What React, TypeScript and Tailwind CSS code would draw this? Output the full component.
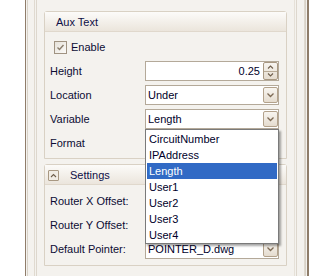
import React from "react";

const font = { fontFamily: '"Liberation Sans", Arial, sans-serif' };

function DropBtn() {
  return (
    <div className="absolute right-0 top-[1px] w-[15px] h-[16px] rounded-[2px] border border-[#b3a28c] bg-gradient-to-b from-[#f8f5f0] to-[#e5dccf] flex items-center justify-center">
      <svg width="9" height="6" viewBox="0 0 9 6">
        <path d="M1.5 1.5 L4.5 4.5 L7.5 1.5" fill="none" stroke="#7d6a55" strokeWidth="1.3" />
      </svg>
    </div>
  );
}

function Combo({ value }: { value: string }) {
  return (
    <div className="relative w-[134px] h-[20px] bg-white border border-[#b4a999] text-[11px] leading-[18px] pl-[2px] text-[#00002a]">
      {value}
      <DropBtn />
    </div>
  );
}

function Row({ label, children }: { label: string; children?: React.ReactNode }) {
  return (
    <div className="flex items-center h-[20px]">
      <div className="w-[95px] text-[11px] text-[#0c0c34]">{label}</div>
      {children}
    </div>
  );
}

export default function App() {
  const items = ["CircuitNumber", "IPAddress", "Length", "User1", "User2", "User3", "User4"];
  return (
    <div className="w-[326px] h-[276px] bg-white flex overflow-hidden relative" style={font}>
      <div className="ml-[25px] w-[284px] h-full border-l border-r-2 border-[#8f7d6a] bg-[#f4f2ee] flex">
        <div className="ml-[1px] mr-[1px] flex-1 border-l border-r border-[#d8d2c8] flex">
          <div className="ml-[6px] flex-1 border-l border-r border-[#e0dad0] flex">
            <div className="ml-[1px] mr-[7px] flex-1 border-l border-r border-[#ddd7cd] flex">
              <div className="flex-1 mr-[1px] border-r border-[#e6e1d8] pt-[11px] flex flex-col">
                {/* Aux Text group */}
                <div className="ml-[7px] w-[243px] h-[148px] border border-[#d9d1c4] rounded-t-[3px] flex flex-col">
                  <div className="h-[20px] pt-[2px] border-b border-[#e0d8cc] bg-gradient-to-b from-[#fcfbf9] to-[#ebe5dc] flex items-center pl-[11px] text-[11px] text-[#0e0e46]">
                    Aux Text
                  </div>
                  <div className="flex-1 pl-[5px] flex flex-col">
                    <div className="flex items-center h-[13px] mt-[9px] ml-[4px]">
                      <div className="w-[13px] h-[13px] border border-[#a09382] bg-gradient-to-br from-[#e6e2da] to-[#fbfaf8] flex items-center justify-center">
                        <svg width="9" height="9" viewBox="0 0 9 9">
                          <path d="M1.5 4.5 L3.5 6.5 L7.5 2" fill="none" stroke="#8a7d6c" strokeWidth="1.4" />
                        </svg>
                      </div>
                      <span className="ml-[4px] text-[11px] text-[#0c0c34]">Enable</span>
                    </div>
                    <div className="mt-[7px] flex flex-col gap-[4px]">
                      <Row label="Height">
                        <div className="relative w-[134px] h-[20px] bg-white border border-[#b4a999] text-[11px] leading-[18px] text-right pr-[18px] text-[#00002a]">
                          0.25
                          <div className="absolute right-0 top-0 w-[15px] h-[18px] rounded-[2px] border border-[#a89882] bg-gradient-to-b from-[#f8f5f0] to-[#e5dccf] flex flex-col">
                            <div className="flex-1 flex items-center justify-center border-b border-[#b8aa96]">
                              <svg width="7" height="4" viewBox="0 0 7 4"><path d="M1 3.5 L3.5 1 L6 3.5" fill="none" stroke="#6f5e4c" strokeWidth="1.1" /></svg>
                            </div>
                            <div className="flex-1 flex items-center justify-center">
                              <svg width="7" height="4" viewBox="0 0 7 4"><path d="M1 0.5 L3.5 3 L6 0.5" fill="none" stroke="#6f5e4c" strokeWidth="1.1" /></svg>
                            </div>
                          </div>
                        </div>
                      </Row>
                      <Row label="Location"><Combo value="Under" /></Row>
                      <Row label="Variable"><Combo value="Length" /></Row>
                      <Row label="Format"><Combo value="" /></Row>
                    </div>
                  </div>
                </div>
                {/* Settings group */}
                <div className="ml-[7px] w-[243px] mt-[5px] h-[102px] border border-[#d9d1c4] rounded-t-[3px] flex flex-col">
                  <div className="h-[20px] pt-[1px] border-b border-[#e0d8cc] bg-gradient-to-b from-[#fcfbf9] to-[#ebe5dc] flex items-center pl-[3px] text-[11px] text-[#0e0e46]">
                    <div className="w-[11px] h-[11px] border border-[#a89882] rounded-[1px] bg-[#f1ece4] flex items-center justify-center">
                      <svg width="7" height="5" viewBox="0 0 7 5"><path d="M1 4 L3.5 1.5 L6 4" fill="none" stroke="#6f5e4c" strokeWidth="1.1" /></svg>
                    </div>
                    <span className="ml-[11px]">Settings</span>
                  </div>
                  <div className="flex-1 pl-[5px] pt-[6px] flex flex-col gap-[4px]">
                    <Row label="Router X Offset:"><Combo value="" /></Row>
                    <Row label="Router Y Offset:"><Combo value="" /></Row>
                    <Row label="Default Pointer:"><Combo value="POINTER_D.dwg" /></Row>
                  </div>
                </div>
              </div>
            </div>
          </div>
        </div>
      </div>
      {/* dropdown list overlay */}
      <div className="absolute left-[145px] top-[129px] w-[134px] h-[115px] bg-white border border-[#7a7a7a] shadow-[2px_2px_2px_rgba(0,0,0,0.35)] p-[1px]">
        {items.map((it) => (
          <div
            key={it}
            className={
              "h-[16px] leading-[16px] text-[11px] pl-[2px] " +
              (it === "Length" ? "bg-[#316ac5] text-white" : "text-[#00002a]")
            }
          >
            {it}
          </div>
        ))}
      </div>
    </div>
  );
}
